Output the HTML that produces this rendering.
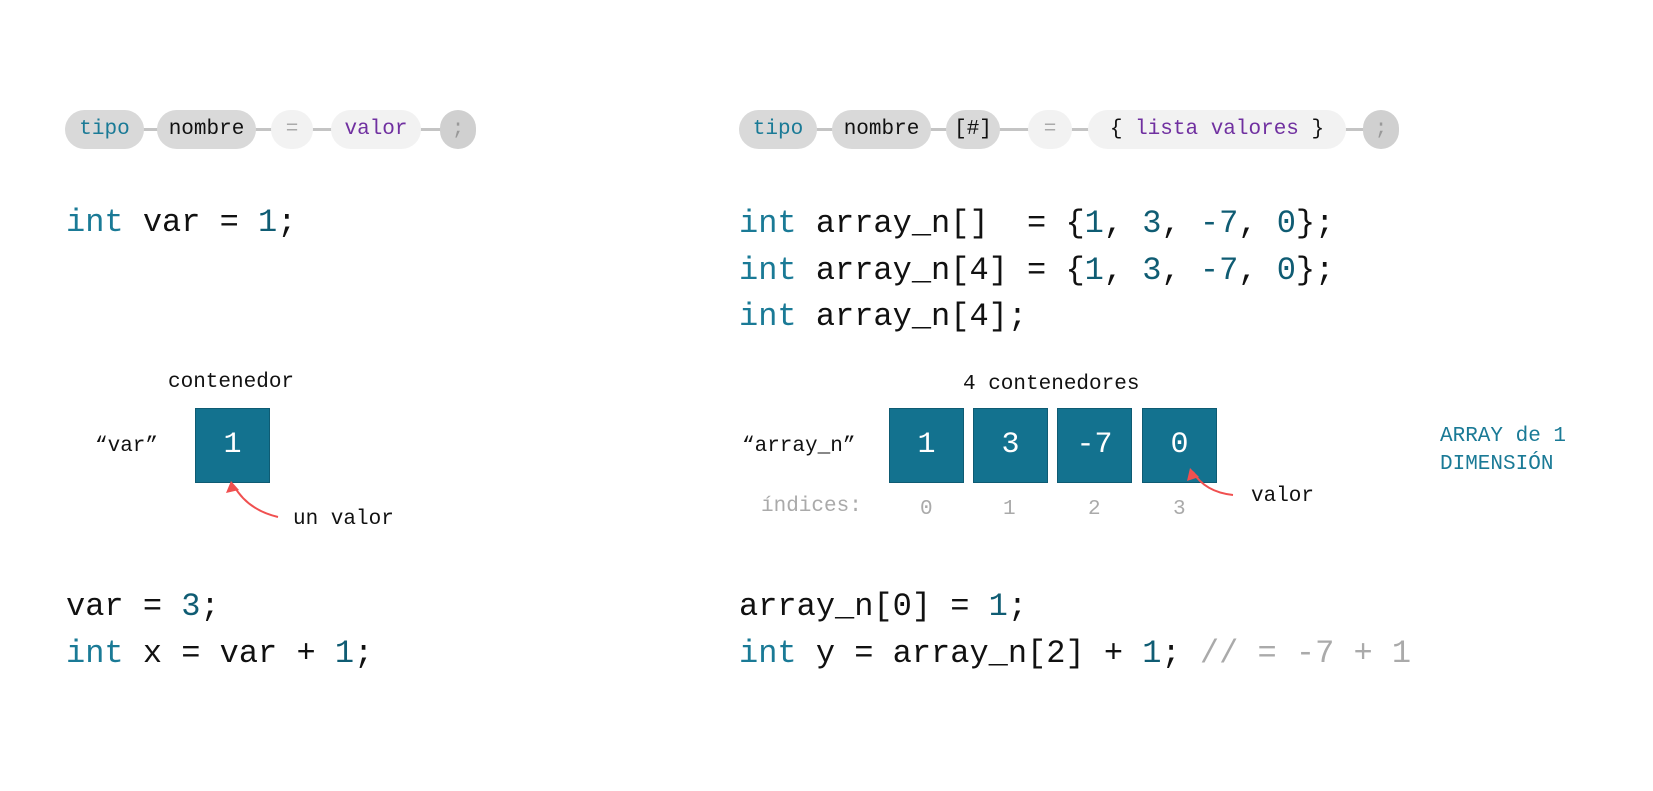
<!DOCTYPE html>
<html><head><meta charset="utf-8"><style>
body{margin:0;width:1653px;height:791px;background:#fff;position:relative;overflow:hidden;font-family:"Liberation Mono","DejaVu Sans Mono",monospace;}
.a{position:absolute;white-space:pre;}
.lbl{font-size:21px;color:#111;}
.pill{position:absolute;top:110px;height:39px;border-radius:20px;background:#d9d9d9;font-size:21px;line-height:39px;text-align:center;color:#111;}
.lt{background:#f2f2f2;}
.ln{position:absolute;top:128px;height:3px;background:#c4c4c4;}
.k{color:#1a7a96 !important}.n{color:#0f5c73}.p{color:#7030a0}.g{color:#aaa !important}
.code{font-size:32px;color:#111;}
.box{position:absolute;top:408px;width:73px;height:73px;background:#13728f;border:1px solid #0e5b73;color:#fff;font-size:30px;line-height:73px;text-align:center;}
</style></head><body>
<!-- left pills -->
<div class="ln" style="left:100px;width:360px"></div>
<div class="pill k" style="left:65px;width:79px">tipo</div>
<div class="pill" style="left:157px;width:99px">nombre</div>
<div class="pill lt g" style="left:271px;width:42px">=</div>
<div class="pill lt p" style="left:331px;width:90px">valor</div>
<div class="pill" style="left:440px;width:36px;background:#d0d0d0;color:#999">;</div>
<!-- right pills -->
<div class="ln" style="left:770px;width:600px"></div>
<div class="pill k" style="left:739px;width:78px">tipo</div>
<div class="pill" style="left:832px;width:99px">nombre</div>
<div class="pill" style="left:946px;width:54px">[#]</div>
<div class="pill lt g" style="left:1028px;width:44px">=</div>
<div class="pill lt" style="left:1088px;width:258px">{ <span class="p">lista valores</span> }</div>
<div class="pill" style="left:1363px;width:36px;background:#d0d0d0;color:#999">;</div>

<div class="a code" style="left:66px;top:204px"><span class="k">int</span> var = <span class="n">1</span>;</div>
<div class="a code" style="left:739px;top:201px;line-height:46.6px"><span class="k">int</span> array_n[]  = {<span class="n">1</span>, <span class="n">3</span>, <span class="n">-7</span>, <span class="n">0</span>};
<span class="k">int</span> array_n[4] = {<span class="n">1</span>, <span class="n">3</span>, <span class="n">-7</span>, <span class="n">0</span>};
<span class="k">int</span> array_n[4];</div>

<div class="a code" style="left:66px;top:584px;line-height:46.6px">var = <span class="n">3</span>;
<span class="k">int</span> x = var + <span class="n">1</span>;</div>
<div class="a code" style="left:739px;top:584px;line-height:46.6px">array_n[0] = <span class="n">1</span>;
<span class="k">int</span> y = array_n[2] + <span class="n">1</span>; <span class="g">// = -7 + 1</span></div>

<!-- left diagram -->
<div class="a lbl" style="left:168px;top:371px">contenedor</div>
<div class="a lbl" style="left:95px;top:435px">“var”</div>
<div class="box" style="left:195px">1</div>
<div class="a lbl" style="left:293px;top:508px">un valor</div>
<!-- right diagram -->
<div class="a lbl" style="left:963px;top:373px">4 contenedores</div>
<div class="a lbl" style="left:742px;top:435px">“array_n”</div>
<div class="box" style="left:889px">1</div>
<div class="box" style="left:973px">3</div>
<div class="box" style="left:1057px">-7</div>
<div class="box" style="left:1142px">0</div>
<div class="a lbl g" style="left:761px;top:495px">índices:</div>
<div class="a lbl g" style="left:920px;top:498px">0</div>
<div class="a lbl g" style="left:1003px;top:498px">1</div>
<div class="a lbl g" style="left:1088px;top:498px">2</div>
<div class="a lbl g" style="left:1173px;top:498px">3</div>
<div class="a lbl" style="left:1251px;top:485px">valor</div>
<div class="a lbl k" style="left:1440px;top:423px;line-height:28px">ARRAY de 1
DIMENSIÓN</div>
<svg class="a" style="left:0;top:0" width="1653" height="791">
<g fill="none" stroke="#f05050" stroke-width="2">
<path d="M278 517 Q248 510 234 486"/>
<path d="M1233 495 Q1205 492 1193 472"/>
</g>
<g fill="#f05050">
<path d="M231 481 L226 493 L239 490 Z"/>
<path d="M1190 468 L1187 481 L1199 477 Z"/>
</g>
</svg>
</body></html>
